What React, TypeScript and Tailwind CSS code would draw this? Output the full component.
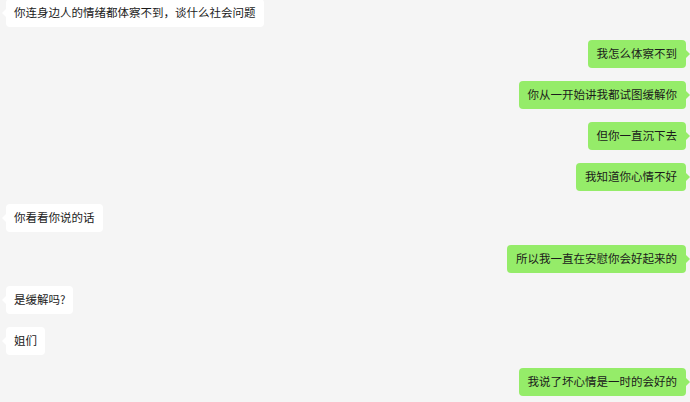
import React from "react";

type Message = { side: "left" | "right"; text: string };

const MESSAGES: Message[] = [
  { side: "left", text: "你连身边人的情绪都体察不到，谈什么社会问题" },
  { side: "right", text: "我怎么体察不到" },
  { side: "right", text: "你从一开始讲我都试图缓解你" },
  { side: "right", text: "但你一直沉下去" },
  { side: "right", text: "我知道你心情不好" },
  { side: "left", text: "你看看你说的话" },
  { side: "right", text: "所以我一直在安慰你会好起来的" },
  { side: "left", text: "是缓解吗?" },
  { side: "left", text: "姐们" },
  { side: "right", text: "我说了坏心情是一时的会好的" },
];

function Bubble({ side, text }: Message): React.ReactElement {
  const mine = side === "right";

  return (
    <div className={mine ? "flex h-[28px] justify-end pr-[4px]" : "flex h-[28px] justify-start pl-[6px]"}>
      <div
        className={
          mine
            ? "relative flex h-full items-center rounded-[4px] bg-[#95ec69] px-[9px] text-[11.5px] leading-none text-[#1b1b1b]"
            : "relative flex h-full items-center rounded-[4px] bg-white px-[8px] text-[11.5px] leading-none text-[#1b1b1b]"
        }
      >
        {text}
        {mine ? (
          <span className="absolute top-1/2 right-[-4px] h-0 w-0 -translate-y-1/2 border-y-[5px] border-l-[5px] border-y-transparent border-l-[#95ec69]" />
        ) : (
          <span className="absolute top-1/2 left-[-4px] h-0 w-0 -translate-y-1/2 border-y-[5px] border-r-[5px] border-y-transparent border-r-white" />
        )}
      </div>
    </div>
  );
}

export default function App(): React.ReactElement {
  return (
    <div
      className="h-[402px] w-[690px] overflow-hidden bg-[#f5f5f5]"
      style={{ fontFamily: '"Noto Sans CJK SC", "Noto Sans", sans-serif' }}
    >
      <div className="-mt-px flex flex-col gap-[13px]">
        {MESSAGES.map((m, i) => (
          <Bubble key={i} side={m.side} text={m.text} />
        ))}
      </div>
    </div>
  );
}
